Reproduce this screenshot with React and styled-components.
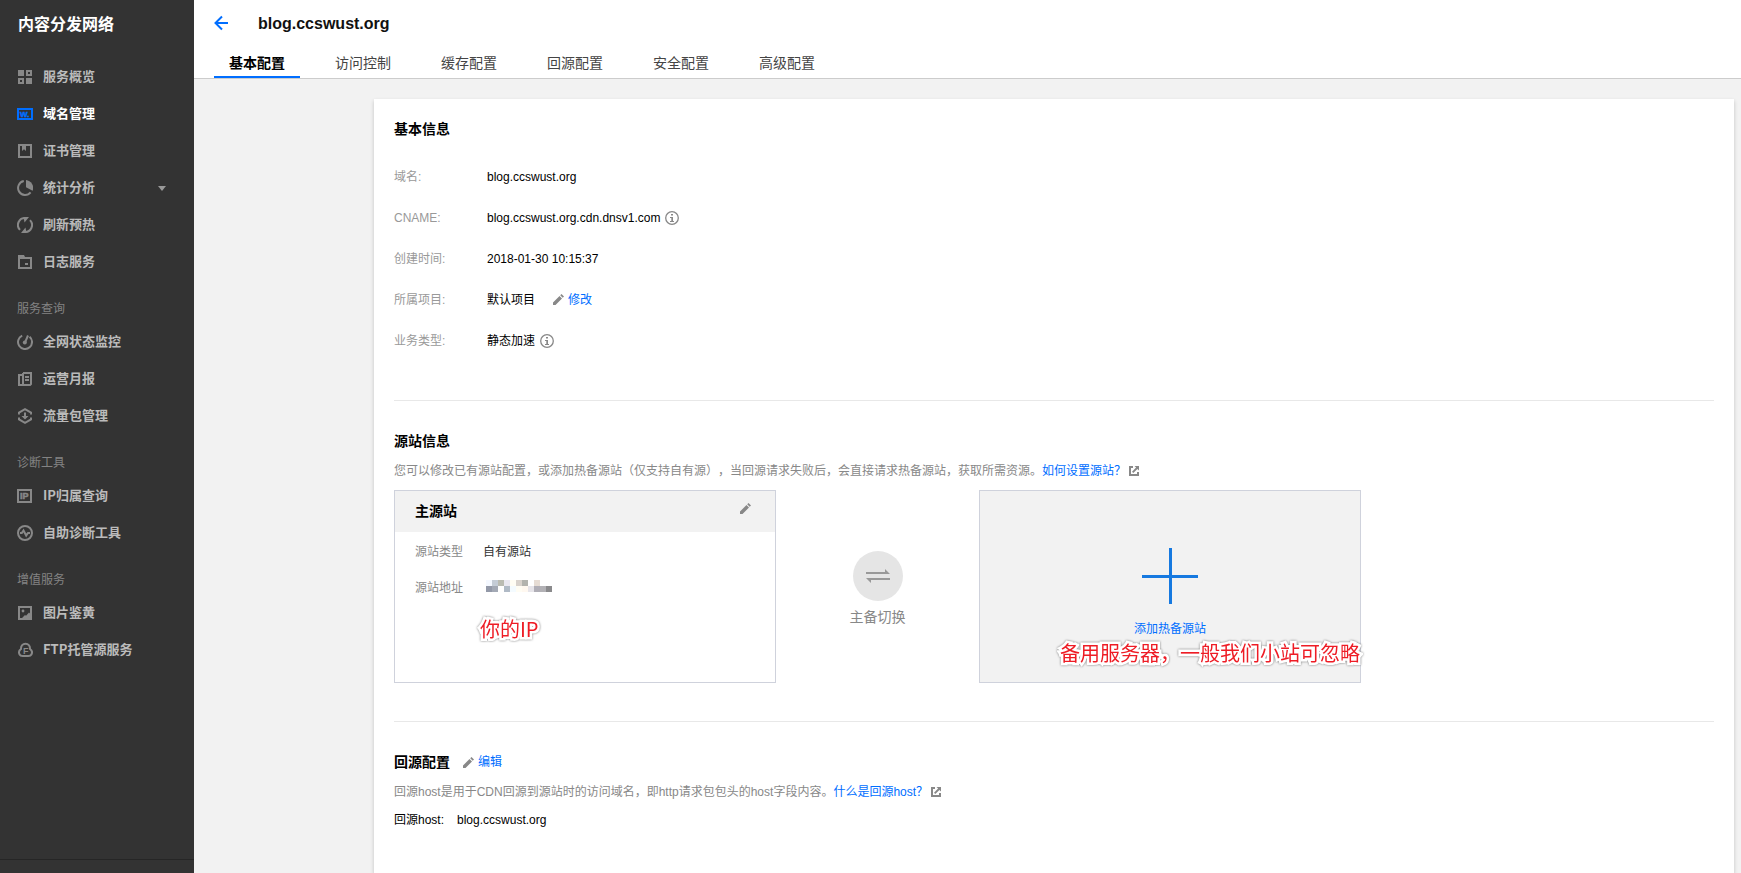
import React, { useState } from 'react';
import styled, { createGlobalStyle } from 'styled-components';

const GlobalStyle = createGlobalStyle`
  * {
    box-sizing: border-box;
  }
  body {
    margin: 0;
    font-family: 'Liberation Sans', 'Noto Sans CJK SC', sans-serif;
    font-size: 12px;
    line-height: 20px;
    text-spacing-trim: space-all;
    color: #000;
    background-color: #f2f2f2;
  }
  a {
    text-decoration: none;
  }
  button {
    padding: 0;
    border: none;
    background: none;
    font: inherit;
    cursor: pointer;
  }
  svg {
    display: block;
    flex-shrink: 0;
  }
`;

const Layout = styled.div`
  display: flex;
  min-height: 100vh;
`;

/* Sidebar */

const Sidebar = styled.aside`
  display: flex;
  flex-direction: column;
  flex-shrink: 0;
  width: 194px;
  background-color: #333;
  font-family: 'Noto Sans CJK SC', sans-serif;
`;

const SidebarTitle = styled.h1`
  margin: 0;
  padding: 11px 18px 24px;
  font-size: 16px;
  line-height: 24px;
  color: #fff;
`;

const Menu = styled.nav`
  flex: 1;
`;

const MenuLabel = styled.div`
  padding: 17px 17px 6px;
  line-height: 20px;
  color: #838383;
`;

const MenuItem = styled.a`
  display: flex;
  align-items: center;
  gap: 10px;
  height: 36px;
  margin-bottom: 1px;
  padding: 0 28px 0 17px;
  font-size: 13px;
  font-weight: bold;
  color: ${(props) => (props.$active ? '#fff' : '#bbb')};
  svg {
    color: ${(props) => (props.$active ? '#006eff' : '#888')};
  }
  &:hover {
    color: #fff;
  }
`;

const MenuText = styled.span`
  padding-bottom: 2px;
`;

const Caret = styled.span`
  margin-left: auto;
  border: 4px solid transparent;
  border-top: 5px solid #999;
  border-bottom: none;
`;

const SidebarFooter = styled.div`
  height: 14px;
  border-top: 1px solid #262626;
`;

/* Header */

const Main = styled.main`
  display: flex;
  flex: 1;
  flex-direction: column;
  min-width: 0;
`;

const Header = styled.header`
  padding: 0 20px;
  border-bottom: 1px solid #ccc;
  background-color: #fff;
`;

const TitleRow = styled.div`
  display: flex;
  align-items: center;
  gap: 28px;
  height: 46px;
`;

const DomainTitle = styled.h2`
  margin: 0;
  padding-top: 2px;
  font-size: 16px;
  color: #111;
`;

const Tabs = styled.div`
  display: flex;
  gap: 20px;
`;

const Tab = styled.button`
  height: 32px;
  && {
    padding: 4px 15px 0;
    border-bottom: 2px solid ${(props) => (props.$active ? '#006eff' : 'transparent')};
    font-size: 14px;
    font-weight: ${(props) => (props.$active ? 'bold' : 'normal')};
  }
  color: ${(props) => (props.$active ? '#000' : '#444')};
`;

/* Content */

const Content = styled.div`
  display: flex;
  flex: 1;
  padding: 20px 7px 0 180px;
`;

const Card = styled.div`
  flex: 1;
  min-width: 0;
  padding: 20px 20px 0;
  background-color: #fff;
  box-shadow: 0 2px 4px rgba(0, 0, 0, 0.2);
`;

const Section = styled.section`
  padding-bottom: 38px;
  & + & {
    padding-top: 30px;
    border-top: 1px solid #e8e8e8;
  }
`;

const SectionHead = styled.div`
  display: flex;
  align-items: center;
  gap: 13px;
  margin-bottom: 10px;
`;

const SectionTitle = styled.h3`
  margin: 0;
  font-size: 14px;
`;

const InfoList = styled.dl`
  margin: 17px 0 1px;
`;

const InfoRow = styled.div`
  display: flex;
  align-items: center;
  height: 41px;
`;

const InfoLabel = styled.dt`
  width: 93px;
  color: #999;
`;

const InfoValue = styled.dd`
  display: flex;
  align-items: center;
  gap: 5px;
  margin: 0;
`;

const EditButton = styled.button`
  display: flex;
  align-items: center;
  gap: 4px;
  margin-left: ${(props) => (props.$spaced ? '13px' : '0')};
  color: #006eff;
`;

const IconButton = styled.button`
  color: #888;
`;

const Hint = styled.p`
  display: flex;
  align-items: center;
  margin: 0;
  color: #888;
`;

const HintLink = styled.a`
  display: flex;
  align-items: center;
  gap: 3px;
  color: #006eff;
`;

const Origins = styled.div`
  display: flex;
  margin-top: 9px;
`;

const OriginBox = styled.div`
  position: relative;
  flex: 0 1 382px;
  min-height: 193px;
  border: 1px solid #cfd2dc;
  background-color: ${(props) => (props.$empty ? '#f2f2f2' : '#fff')};
`;

const OriginHead = styled.div`
  display: flex;
  align-items: center;
  justify-content: space-between;
  height: 41px;
  padding: 0 24px 6px 20px;
  background-color: #f2f2f2;
`;

const OriginTitle = styled.h4`
  margin: 4px 0 0;
  font-size: 14px;
`;

const OriginList = styled.dl`
  display: grid;
  grid-template-columns: 68px 1fr;
  row-gap: 16px;
  margin: 0;
  padding: 10px 20px;
  dt {
    color: #888;
  }
  dd {
    margin: 0;
    color: #333;
  }
`;

const Mosaic = styled.div`
  display: grid;
  grid-template-columns: repeat(11, 6px);
  grid-auto-rows: 6px;
  padding: 2px 3px;
`;

const MosaicCell = styled.span`
  background-color: ${(props) => props.$color};
`;

const Switch = styled.div`
  display: flex;
  flex: 0 1 203px;
  flex-direction: column;
  align-items: center;
  gap: 6px;
  padding-top: 61px;
  font-size: 14px;
  color: #888;
`;

const SwitchButton = styled.button`
  display: flex;
  align-items: center;
  justify-content: center;
  width: 50px;
  height: 50px;
  border-radius: 50%;
  && {
    background-color: #e5e5e5;
  }
  color: #999;
`;

const AddButton = styled.button`
  display: flex;
  flex-direction: column;
  align-items: center;
  gap: 15px;
  width: 100%;
  height: 100%;
  && {
    padding-top: 57px;
  }
  color: #006eff;
`;

/* Red note laid over an origin box */
const Note = styled.span`
  position: absolute;
  top: ${(props) => props.$top}px;
  left: ${(props) => props.$left}px;
  font-family: 'Noto Sans CJK SC', sans-serif;
  font-size: 20px;
  line-height: 30px;
  white-space: nowrap;
  color: #ee1c25;
  -webkit-text-stroke: 5px #fff;
  paint-order: stroke fill;
  filter: drop-shadow(0 0 1px rgba(0, 0, 0, 0.5));
  pointer-events: none;
`;

const HostRow = styled.div`
  display: flex;
  gap: 13px;
  margin-top: 8px;
`;

const icons = {
  overview: (
    <path
      fill="currentColor"
      fillRule="evenodd"
      d="M1 1h6v6H1zM9 1h6v6H9zM11 3v2h2V3zM1 9h6v6H1zM3 11v2h2v-2zM9 9h6v6H9z"
    />
  ),
  domain: (
    <>
      <path fill="none" stroke="currentColor" strokeWidth="2" d="M1 3h14v10H1z" />
      <text
        x="3"
        y="11"
        fontFamily="Liberation Sans, sans-serif"
        fontSize="8"
        fontWeight="bold"
        fill="currentColor"
        stroke="currentColor"
        strokeWidth="0.5"
      >
        W.
      </text>
    </>
  ),
  cert: (
    <>
      <path fill="none" stroke="currentColor" strokeWidth="2" d="M2 2h12v12H2z" />
      <path fill="currentColor" d="M5 3h4v5L7 6.3 5 8z" />
    </>
  ),
  stats: (
    <>
      <path fill="none" stroke="currentColor" strokeWidth="2" d="M6.8 1.1A7 7 0 1 0 13.6 12.3" />
      <path fill="currentColor" d="M9 0a8 8 0 0 1 6.6 10.8L9 7.2z" />
    </>
  ),
  refresh: (
    <>
      <path fill="none" stroke="currentColor" strokeWidth="2" d="M3 12.9A7 7 0 0 1 8.5 1M13 3.1A7 7 0 0 1 7.5 15" />
      <path fill="currentColor" d="M6.500 0H12L7.500 5.500zM9.500 16H4l4.500-5.500z" />
    </>
  ),
  log: (
    <>
      <path fill="none" stroke="currentColor" strokeWidth="2" d="M2 4h12v10H2z" />
      <path fill="currentColor" d="M1 1h6l1.5 3H1zM8 9h3v2H8z" />
    </>
  ),
  monitor: (
    <>
      <path fill="none" stroke="currentColor" strokeWidth="2" d="M5.2 1.6A7 7 0 1 0 12.6 2.7" />
      <path stroke="currentColor" strokeWidth="2" d="M8 8.5l3-7" />
      <circle cx="7.8" cy="8.6" r="2" fill="currentColor" />
    </>
  ),
  report: (
    <path
      fill="none"
      stroke="currentColor"
      strokeWidth="2"
      d="M6 2h8v11l-1 1H2V4h4M6 2v12M8 6h4M8 9h4"
    />
  ),
  traffic: (
    <>
      <path
        fill="none"
        stroke="currentColor"
        strokeWidth="2"
        d="M2 6.5v-2L8 1.2l6 3.3v2M2 9.5v2l6 3.3 6-3.3v-2"
      />
      <path fill="currentColor" d="M7 4.5h2v3.500h2.500L8 11.500 4.500 8H7z" />
    </>
  ),
  ip: (
    <>
      <path fill="none" stroke="currentColor" strokeWidth="2" d="M1 2h13v12H1z" />
      <text
        x="3"
        y="11"
        fontFamily="Liberation Sans, sans-serif"
        fontSize="9"
        fontWeight="bold"
        fill="currentColor"
        stroke="currentColor"
        strokeWidth="0.5"
      >
        IP
      </text>
    </>
  ),
  diagnose: (
    <>
      <circle cx="8" cy="8" r="7" fill="none" stroke="currentColor" strokeWidth="2" />
      <path fill="none" stroke="currentColor" strokeWidth="2" d="M3 8h1.8l1.7-2.5 2.7 5L11 8h2" />
    </>
  ),
  image: (
    <>
      <path fill="none" stroke="currentColor" strokeWidth="2" d="M2 2h12v12H2z" />
      <circle cx="6" cy="6" r="1.4" fill="currentColor" />
      <path fill="currentColor" d="M4.500 13.500L8 10l1 .8L12 7.500l2 2v4z" />
    </>
  ),
  ftp: (
    <>
      <path
        fill="none"
        stroke="currentColor"
        strokeWidth="2"
        d="M4 7C3.8 3.5 5.8 1.8 8.5 1.8S13.2 3.5 13 7c2.2 1.5 2.3 3.8 1.4 5.5-.6 1.2-1.7 1.5-3 1.5H5.6c-1.3 0-2.4-.3-3-1.5C1.7 10.8 1.8 8.5 4 7z"
      />
      <text x="6" y="12" fontFamily="Liberation Sans, sans-serif" fontSize="9" fontWeight="bold" fill="currentColor">
        F
      </text>
    </>
  ),
};

const MenuIcon = ({ name }) => (
  <svg width="16" height="16" viewBox="0 0 16 16" aria-hidden="true">
    {icons[name]}
  </svg>
);

const BackIcon = () => (
  <svg width="16" height="16" viewBox="0 0 16 16" fill="none" stroke="#006eff" strokeWidth="2">
    <path d="M14 8H1.5M8 1.5L1.5 8 8 14.5" />
  </svg>
);

const InfoIcon = () => (
  <svg width="14" height="14" viewBox="0 0 14 14" aria-hidden="true">
    <circle cx="7" cy="7" r="6.3" fill="none" stroke="#888" strokeWidth="1.3" />
    <path fill="#888" d="M6 3h2v1.5H6zM5 6h3v4h1v1H5v-1h1.3V7H5z" />
  </svg>
);

const PencilIcon = () => (
  <svg width="11" height="11" viewBox="0 0 11 11" aria-hidden="true">
    <path fill="#888" d="M0 11V8.5L6.5 2 9 4.5 2.5 11zM7.2 1.3L8.5 0 11 2.5 9.7 3.8z" />
  </svg>
);

const ExternalIcon = () => (
  <svg width="10" height="10" viewBox="0 0 10 10" aria-hidden="true">
    <path fill="#888" d="M0 0h4v2H2v6h6V6h2v4H0zM5.5 0H10v4.5L8.4 2.900 4.300 7 3 5.700l4.100-4.100z" />
  </svg>
);

const SwapIcon = () => (
  <svg width="24" height="14" viewBox="0 0 24 14" aria-hidden="true">
    <path fill="currentColor" d="M0 3h19V0l5 5H0zM24 9v2H5v3L0 9z" />
  </svg>
);

const PlusIcon = () => (
  <svg width="56" height="56" viewBox="0 0 56 56" aria-hidden="true">
    <path fill="#1679e0" d="M27 0h3v27h26v3H30v26h-3V30H0v-3h27z" />
  </svg>
);

const menu = [
  {
    items: [
      { icon: 'overview', text: '服务概览' },
      { icon: 'domain', text: '域名管理', active: true },
      { icon: 'cert', text: '证书管理' },
      { icon: 'stats', text: '统计分析', caret: true },
      { icon: 'refresh', text: '刷新预热' },
      { icon: 'log', text: '日志服务' },
    ],
  },
  {
    label: '服务查询',
    items: [
      { icon: 'monitor', text: '全网状态监控' },
      { icon: 'report', text: '运营月报' },
      { icon: 'traffic', text: '流量包管理' },
    ],
  },
  {
    label: '诊断工具',
    items: [
      { icon: 'ip', text: 'IP归属查询' },
      { icon: 'diagnose', text: '自助诊断工具' },
    ],
  },
  {
    label: '增值服务',
    items: [
      { icon: 'image', text: '图片鉴黄' },
      { icon: 'ftp', text: 'FTP托管源服务' },
    ],
  },
];

const tabs = ['基本配置', '访问控制', '缓存配置', '回源配置', '安全配置', '高级配置'];

// Blurred-out server address
const mosaic = [
  '#f4f8ff', '#c4ccd6', '#babbb2', '#e9e7f0', '#fffdf4', '#d8d2cc', '#b2b3ae', '#fff', '#e6dcd4', '#fff', '#fff',
  '#9399a8', '#a3a9b5', '#fff', '#b0bac6', '#f4fbff', '#fffdf4', '#fff8f0', '#e6e4e9', '#b0aeb6', '#b2b1b5', '#8a8a8c',
];

const App = () => {
  const [activeTab, setActiveTab] = useState(tabs[0]);

  return (
    <Layout>
      <GlobalStyle />
      <Sidebar>
        <SidebarTitle>内容分发网络</SidebarTitle>
        <Menu>
          {menu.map((group, index) => (
            <React.Fragment key={index}>
              {group.label && <MenuLabel>{group.label}</MenuLabel>}
              {group.items.map((item) => (
                <MenuItem key={item.text} href="#" $active={item.active}>
                  <MenuIcon name={item.icon} />
                  <MenuText>{item.text}</MenuText>
                  {item.caret && <Caret />}
                </MenuItem>
              ))}
            </React.Fragment>
          ))}
        </Menu>
        <SidebarFooter />
      </Sidebar>

      <Main>
        <Header>
          <TitleRow>
            <button type="button" aria-label="返回">
              <BackIcon />
            </button>
            <DomainTitle>blog.ccswust.org</DomainTitle>
          </TitleRow>
          <Tabs role="tablist">
            {tabs.map((tab) => (
              <Tab
                key={tab}
                type="button"
                role="tab"
                aria-selected={tab === activeTab}
                $active={tab === activeTab}
                onClick={() => setActiveTab(tab)}
              >
                {tab}
              </Tab>
            ))}
          </Tabs>
        </Header>

        <Content>
          <Card>
            <Section>
              <SectionTitle>基本信息</SectionTitle>
              <InfoList>
                <InfoRow>
                  <InfoLabel>域名:</InfoLabel>
                  <InfoValue>blog.ccswust.org</InfoValue>
                </InfoRow>
                <InfoRow>
                  <InfoLabel>CNAME:</InfoLabel>
                  <InfoValue>
                    blog.ccswust.org.cdn.dnsv1.com
                    <InfoIcon />
                  </InfoValue>
                </InfoRow>
                <InfoRow>
                  <InfoLabel>创建时间:</InfoLabel>
                  <InfoValue>2018-01-30 10:15:37</InfoValue>
                </InfoRow>
                <InfoRow>
                  <InfoLabel>所属项目:</InfoLabel>
                  <InfoValue>
                    默认项目
                    <EditButton type="button" $spaced>
                      <PencilIcon />
                      修改
                    </EditButton>
                  </InfoValue>
                </InfoRow>
                <InfoRow>
                  <InfoLabel>业务类型:</InfoLabel>
                  <InfoValue>
                    静态加速
                    <InfoIcon />
                  </InfoValue>
                </InfoRow>
              </InfoList>
            </Section>

            <Section>
              <SectionHead>
                <SectionTitle>源站信息</SectionTitle>
              </SectionHead>
              <Hint>
                您可以修改已有源站配置，或添加热备源站（仅支持自有源），当回源请求失败后，会直接请求热备源站，获取所需资源。
                <HintLink href="#">
                  如何设置源站？
                  <ExternalIcon />
                </HintLink>
              </Hint>
              <Origins>
                <OriginBox>
                  <OriginHead>
                    <OriginTitle>主源站</OriginTitle>
                    <IconButton type="button" aria-label="编辑主源站">
                      <PencilIcon />
                    </IconButton>
                  </OriginHead>
                  <OriginList>
                    <dt>源站类型</dt>
                    <dd>自有源站</dd>
                    <dt>源站地址</dt>
                    <dd>
                      <Mosaic>
                        {mosaic.map((color, index) => (
                          <MosaicCell key={index} $color={color} />
                        ))}
                      </Mosaic>
                    </dd>
                  </OriginList>
                  <Note $top={123} $left={85}>你的IP</Note>
                </OriginBox>
                <Switch>
                  <SwitchButton type="button" aria-labelledby="switch-label">
                    <SwapIcon />
                  </SwitchButton>
                  <span id="switch-label">主备切换</span>
                </Switch>
                <OriginBox $empty>
                  <AddButton type="button">
                    <PlusIcon />
                    添加热备源站
                  </AddButton>
                  <Note $top={147} $left={80}>备用服务器，一般我们小站可忽略</Note>
                </OriginBox>
              </Origins>
            </Section>

            <Section>
              <SectionHead>
                <SectionTitle>回源配置</SectionTitle>
                <EditButton type="button">
                  <PencilIcon />
                  编辑
                </EditButton>
              </SectionHead>
              <Hint>
                回源host是用于CDN回源到源站时的访问域名，即http请求包包头的host字段内容。
                <HintLink href="#">
                  什么是回源host？
                  <ExternalIcon />
                </HintLink>
              </Hint>
              <HostRow>
                <span>回源host:</span>
                <span>blog.ccswust.org</span>
              </HostRow>
            </Section>
          </Card>
        </Content>
      </Main>
    </Layout>
  );
};

export default App;
